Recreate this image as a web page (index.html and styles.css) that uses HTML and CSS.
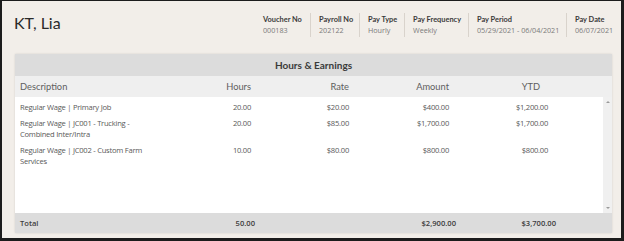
FILE: index.html
```html
<!DOCTYPE html>
<html>
<head>
<meta charset="utf-8">
<link rel="stylesheet" href="styles.css">
</head>
<body>
<div class="frame">
  <header class="top">
    <h1 class="name">KT, Lia</h1>
    <div class="meta">
      <div class="field f-voucher"><div class="lbl">Voucher No</div><div class="val">000183</div></div>
      <div class="field f-payroll"><div class="lbl">Payroll No</div><div class="val">202122</div></div>
      <div class="field f-type"><div class="lbl">Pay Type</div><div class="val">Hourly</div></div>
      <div class="field f-freq"><div class="lbl">Pay Frequency</div><div class="val">Weekly</div></div>
      <div class="field f-period"><div class="lbl">Pay Period</div><div class="val">05/29/2021 - 06/04/2021</div></div>
      <div class="field f-date"><div class="lbl">Pay Date</div><div class="val">06/07/2021</div></div>
    </div>
  </header>
  <section class="panel">
    <div class="panel-title">Hours &amp; Earnings</div>
    <div class="cols">
      <div class="c-desc">Description</div>
      <div class="num">Hours</div>
      <div class="num">Rate</div>
      <div class="num">Amount</div>
      <div class="num ytd-h">YTD</div>
    </div>
    <div class="body">
      <div class="rows">
        <div class="row">
          <div class="c-desc">Regular Wage | Primary Job</div>
          <div class="num">20.00</div>
          <div class="num">$20.00</div>
          <div class="num">$400.00</div>
          <div class="num">$1,200.00</div>
        </div>
        <div class="row">
          <div class="c-desc">Regular Wage | JC001 - Trucking - Combined Inter/Intra</div>
          <div class="num">20.00</div>
          <div class="num">$85.00</div>
          <div class="num">$1,700.00</div>
          <div class="num">$1,700.00</div>
        </div>
        <div class="row">
          <div class="c-desc">Regular Wage | JC002 - Custom Farm Services</div>
          <div class="num">10.00</div>
          <div class="num">$80.00</div>
          <div class="num">$800.00</div>
          <div class="num">$800.00</div>
        </div>
      </div>
      <div class="scrollbar">
        <span class="arrow up"></span>
        <span class="arrow down"></span>
      </div>
    </div>
    <div class="foot">
      <div class="c-desc">Total</div>
      <div class="num">50.00</div>
      <div class="num"></div>
      <div class="num">$2,900.00</div>
      <div class="num">$3,700.00</div>
    </div>
  </section>
</div>
</body>
</html>
```

FILE: styles.css
```css
html, body {
  margin: 0;
  padding: 0;
  background: #1c1c1c;
}

.frame {
  box-sizing: border-box;
  width: 624px;
  height: 241px;
  background: #f2eee9;
  border-style: solid;
  border-color: #1c1c1c;
  border-width: 1px 3px 3px 2px;
  font-family: Lato, "Open Sans", sans-serif;
  color: #333;
  display: flex;
  flex-direction: column;
}

.top {
  display: flex;
  justify-content: space-between;
  align-items: flex-start;
  height: 53px;
  padding: 0 9px 0 12px;
}

.name {
  margin: 12px 0 0;
  font-size: 16px;
  line-height: 19px;
  font-weight: 400;
  color: #2a2a2a;
}

.meta {
  display: grid;
  grid-template-columns: 47px 49px 45px 64px 98px 46px;
  margin-top: 12px;
}

.field {
  padding: 1px 0 1px 8px;
  border-left: 1px solid #d9d3cc;
  font-size: 7.4px;
  line-height: 11px;
  white-space: nowrap;
}

.field.f-voucher {
  border-left: none;
  padding-left: 0;
}

.lbl {
  font-weight: 700;
  color: #3a3a3a;
}

.val {
  font-family: "Open Sans", sans-serif;
  font-size: 7.2px;
  color: #7a7a7a;
}

.panel {
  margin: 0 9px 0 13px;
  display: flex;
  flex-direction: column;
  box-shadow: 0 0 2px rgba(0, 0, 0, 0.12);
}

.panel-title {
  height: 22px;
  line-height: 22px;
  background: #dcdcdc;
  text-align: center;
  font-size: 10px;
  font-weight: 700;
  color: #3a3a3a;
}

.cols, .row {
  display: grid;
  grid-template-columns: 132px 99px 98px 100px 99px;
  padding-left: 5px;
}

.cols {
  height: 21px;
  line-height: 21px;
  background: #efefef;
  font-size: 9.3px;
  color: #5e5e5e;
}

.cols .ytd-h {
  padding-right: 8px;
}

.num {
  text-align: right;
}

.body {
  display: flex;
  height: 116px;
  background: #fff;
}

.rows {
  flex: 1;
  padding-top: 2px;
}

.row {
  font-family: "Open Sans", sans-serif;
  font-size: 7.6px;
  letter-spacing: -0.25px;
  line-height: 11px;
  color: #595959;
  padding-top: 2.5px;
  padding-bottom: 2.5px;
}

.scrollbar {
  width: 9px;
  background: #f0f0f0;
  display: flex;
  flex-direction: column;
  justify-content: space-between;
  align-items: center;
  padding: 4px 0;
  box-sizing: border-box;
}

.arrow {
  width: 0;
  height: 0;
  border-left: 2px solid transparent;
  border-right: 2px solid transparent;
}

.arrow.up {
  border-bottom: 2px solid #9a9a9a;
}

.arrow.down {
  border-top: 2px solid #9a9a9a;
}

.foot {
  display: grid;
  grid-template-columns: 135px 100px 100px 101px 100px;
  padding-left: 5px;
  height: 20px;
  line-height: 20px;
  background: #dcdcdc;
  font-family: "Open Sans", sans-serif;
  font-size: 7.6px;
  font-weight: 600;
  color: #3e3e3e;
}
```
